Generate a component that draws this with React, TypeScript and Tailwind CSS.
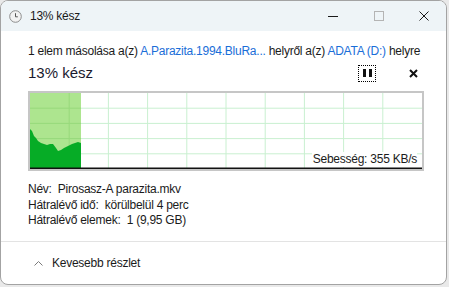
import React from 'react'

// Windows copy progress dialog ("13% kész")

const font = { fontFamily: '"Liberation Sans", Arial, sans-serif' }

const ClockIcon = () => (
  <svg width="13" height="13" viewBox="0 0 13 13">
    <circle cx="6.5" cy="6.5" r="5.8" fill="#f2f2f2" stroke="#8c8c8c" strokeWidth="1" />
    <path d="M6.5 3.2V6.8H8.8" fill="none" stroke="#555" strokeWidth="1" />
  </svg>
)

const SpeedChart = () => {
  const cols = [39.2, 78.4, 117.6, 156.8, 196, 235.2, 274.4, 313.6, 352.8]
  const rows = [15.2, 30.4, 45.6, 60.8]
  const curve =
    'M0 36 L2 38 L4 43 L6 45 L8 48 L11 50 L14 51 L17 52 L20 51 L23 51 L26 55 L28 58 L31 57 L34 55 L38 53 L42 51 L45 50 L48 49 L51 50 L51 76 L0 76 Z'
  return (
    <svg width="392" height="76" viewBox="0 0 392 76" className="block">
      <rect x="0" y="0" width="392" height="76" fill="#fff" />
      <rect x="0" y="0" width="51" height="76" fill="#ade58f" />
      {cols.map((x) => (
        <line key={x} x1={x} y1="0" x2={x} y2="76" stroke={x < 51 ? '#97d97c' : '#c9f0d0'} strokeWidth="1" />
      ))}
      {rows.map((y) => (
        <React.Fragment key={y}>
          <line x1="0" y1={y} x2="51" y2={y} stroke="#97d97c" strokeWidth="1" />
          <line x1="51" y1={y} x2="392" y2={y} stroke="#c9f0d0" strokeWidth="1" />
        </React.Fragment>
      ))}
      <path d={curve} fill="#06ac26" />
      <rect x="0" y="74.5" width="392" height="1.5" fill="#111" />
    </svg>
  )
}

export default function App() {
  return (
    <div className="w-[449px] h-[287px] bg-[#e9e9e9] tracking-[-0.25px]" style={font}>
      <div className="w-[447px] h-[285px] rounded-[8px] border border-[#a3a3a3] overflow-hidden bg-white flex flex-col">
        {/* title bar */}
        <div className="h-[30px] shrink-0 bg-[#eef4f7] flex items-center">
          <div className="ml-[8px] flex items-center">
            <ClockIcon />
          </div>
          <span className="ml-[8px] text-[12px] text-[#1a1a1a]">13% kész</span>
          <div className="ml-auto flex items-center h-full">
            <div className="w-[46px] h-full flex items-center justify-center">
              <div className="w-[10px] h-px bg-[#1a1a1a]" />
            </div>
            <div className="w-[46px] h-full flex items-center justify-center">
              <div className="w-[10px] h-[10px] border border-[#b4b4b4]" />
            </div>
            <div className="w-[44px] h-full flex items-center justify-center">
              <svg width="10" height="10" viewBox="0 0 10 10">
                <path d="M0.5 0.5L9.5 9.5M9.5 0.5L0.5 9.5" stroke="#1a1a1a" strokeWidth="1" />
              </svg>
            </div>
          </div>
        </div>

        {/* body */}
        <div className="pl-[27px] pr-[24px] pt-[12px]">
          <div className="text-[12px] leading-[16px] text-[#1b1b1b] whitespace-nowrap">
            1 elem másolása a(z) <span className="text-[#1a6ed8]">A.Parazita.1994.BluRa...</span> helyről a(z){' '}
            <span className="text-[#1a6ed8]">ADATA (D:)</span> helyre
          </div>
          <div className="mt-[4px] flex items-center h-[20px]">
            <span className="text-[15px] tracking-normal text-[#1a1a2e]">13% kész</span>
            <div className="ml-auto mr-[33px] w-[18px] h-[17px] border border-dotted border-black flex items-center justify-center gap-[3px]">
              <div className="w-[3px] h-[8px] bg-[#111]" />
              <div className="w-[3px] h-[8px] bg-[#111]" />
            </div>
            <svg width="9" height="9" viewBox="0 0 9 9" className="mr-[4px]">
              <path d="M1 1L8 8M8 1L1 8" stroke="#111" strokeWidth="2" />
            </svg>
          </div>

          {/* chart */}
          <div className="relative mt-[8px] w-[396px] h-[80px] border-2 border-[#c6c6c6]">
            <SpeedChart />
            <span className="absolute right-[5px] bottom-[2px] bg-white text-[12px] leading-[15px] text-[#1b1b1b] pl-[1px]">
              Sebesség: 355 KB/s
            </span>
          </div>

          {/* details */}
          <div className="mt-[11px] text-[12px] leading-[15.5px] text-[#1b1b1b]">
            <div>Név:&nbsp; Pirosasz-A parazita.mkv</div>
            <div>Hátralévő idő:&nbsp; körülbelül 4 perc</div>
            <div>Hátralévő elemek:&nbsp; 1 (9,95 GB)</div>
          </div>
        </div>

        {/* footer */}
        <div className="mt-auto h-[43px] border-t border-[#e3e3e3] flex items-center">
          <svg width="9" height="6" viewBox="0 0 9 6" className="ml-[33px]">
            <path d="M0.5 5.5L4.5 1.5L8.5 5.5" fill="none" stroke="#7a7a7a" strokeWidth="1" />
          </svg>
          <span className="ml-[9px] text-[12px] text-[#1b1b1b]">Kevesebb részlet</span>
        </div>
      </div>
    </div>
  )
}
